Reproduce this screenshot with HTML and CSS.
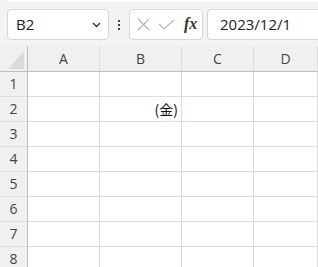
FILE: index.html
```html
<!DOCTYPE html>
<html lang="ja">
<head>
  <meta charset="UTF-8" />
  <title>Sheet</title>
  <link rel="stylesheet" href="styles.css">
</head>
<body>
  <div class="ribbon-edge"></div>
  <div class="toolbar">
    <div class="name-box">
      <span>B2</span>
      <svg class="chevron" width="9" height="6" viewBox="0 0 9 6"><path d="M1 1 L4.5 4.5 L8 1" fill="none" stroke="#333" stroke-width="1.4"/></svg>
    </div>
    <div class="dots"><i></i><i></i><i></i></div>
    <div class="fx-group">
      <svg width="13" height="13" viewBox="0 0 13 13"><path d="M1 1 L12 12 M12 1 L1 12" stroke="#b4b4b4" stroke-width="1.1" fill="none"/></svg>
      <svg width="17" height="13" viewBox="0 0 17 13"><path d="M1 6 L6 11 L16 2" stroke="#b4b4b4" stroke-width="1.1" fill="none"/></svg>
      <span class="fx">fx</span>
    </div>
    <div class="formula-bar">2023/12/1</div>
  </div>

  <div class="sheet">
    <div class="corner"><span class="tri"></span></div>
    <div class="col-head">A</div>
    <div class="col-head wide">B</div>
    <div class="col-head">C</div>
    <div class="col-head">D</div>

    <div class="row-head">1</div><div class="cell"></div><div class="cell"></div><div class="cell"></div><div class="cell"></div>
    <div class="row-head">2</div><div class="cell"></div><div class="cell value">(金)</div><div class="cell"></div><div class="cell"></div>
    <div class="row-head">3</div><div class="cell"></div><div class="cell"></div><div class="cell"></div><div class="cell"></div>
    <div class="row-head">4</div><div class="cell"></div><div class="cell"></div><div class="cell"></div><div class="cell"></div>
    <div class="row-head">5</div><div class="cell"></div><div class="cell"></div><div class="cell"></div><div class="cell"></div>
    <div class="row-head">6</div><div class="cell"></div><div class="cell"></div><div class="cell"></div><div class="cell"></div>
    <div class="row-head">7</div><div class="cell"></div><div class="cell"></div><div class="cell"></div><div class="cell"></div>
    <div class="row-head">8</div><div class="cell"></div><div class="cell"></div><div class="cell"></div><div class="cell"></div>
  </div>
</body>
</html>
```

FILE: styles.css
```css
body, html {
  margin: 0;
  padding: 0;
  background: #f3f3f3;
  font-family: 'Open Sans', 'Noto Sans CJK JP', sans-serif;
  color: #222;
  overflow: hidden;
}
.ribbon-edge {
  height: 3px;
  margin-left: 8px;
  margin-top: -1px;
  background: #fff;
  border-bottom-left-radius: 4px;
}
.toolbar {
  display: flex;
  align-items: center;
  height: 44px;
  padding: 7px 0 6px 7px;
  box-sizing: border-box;
}
.name-box {
  display: flex;
  flex-shrink: 0;
  align-items: center;
  justify-content: space-between;
  width: 102px;
  height: 31px;
  box-sizing: border-box;
  background: #fff;
  border: 1px solid #d6d6d6;
  border-radius: 4px;
  padding: 0 7px 0 8px;
  font-size: 15px;
  color: #222;
}
.name-box span {
  margin-top: -1px;
}
.dots {
  display: flex;
  flex-shrink: 0;
  flex-direction: column;
  gap: 2px;
  width: 20px;
  align-items: center;
}
.dots i {
  display: block;
  width: 2px;
  height: 2px;
  background: #444;
}
.fx-group {
  display: flex;
  flex-shrink: 0;
  align-items: center;
  width: 74px;
  height: 31px;
  box-sizing: border-box;
  background: #fff;
  border: 1px solid #d6d6d6;
  border-radius: 4px;
  padding: 0 0 0 7px;
  gap: 8px;
}
.fx {
  font-family: 'Liberation Serif', serif;
  font-style: italic;
  font-weight: bold;
  font-size: 16px;
  color: #333;
  margin-left: 1px;
  margin-top: -2px;
}
.formula-bar {
  flex: 1;
  min-width: 0;
  margin-left: 4px;
  height: 31px;
  box-sizing: border-box;
  background: #fff;
  border: 1px solid #d6d6d6;
  border-right: none;
  border-radius: 4px 0 0 4px;
  padding: 4px 0 0 12px;
  font-size: 15px;
  color: #222;
}
.sheet {
  display: grid;
  grid-template-columns: 28px 72px 82px 72px 1fr;
  grid-template-rows: 26px;
  grid-auto-rows: 25px;
  background: #fff;
}
.corner, .col-head, .row-head {
  background: #f0f0f0;
  box-sizing: border-box;
}
.corner {
  border-right: 1px solid #bdbdbd;
  border-bottom: 1px solid #bdbdbd;
  position: relative;
}
.tri {
  position: absolute;
  right: 3px;
  bottom: 2px;
  width: 0;
  height: 0;
  border-left: 16px solid transparent;
  border-bottom: 18px solid #dadada;
}
.col-head {
  border-right: 1px solid #dcdcdc;
  border-bottom: 1px solid #bdbdbd;
  text-align: center;
  font-size: 14px;
  line-height: 25px;
  color: #444;
}
.row-head {
  border-right: 1px solid #bdbdbd;
  border-bottom: 1px solid #dcdcdc;
  text-align: center;
  font-size: 14px;
  line-height: 24px;
  color: #444;
}
.cell {
  box-sizing: border-box;
  border-right: 1px solid #dcdcdc;
  border-bottom: 1px solid #dcdcdc;
}
.value {
  text-align: right;
  font-family: 'Noto Sans CJK JP', sans-serif;
  font-size: 14px;
  line-height: 24px;
  padding-right: 3px;
  color: #111;
}
```
